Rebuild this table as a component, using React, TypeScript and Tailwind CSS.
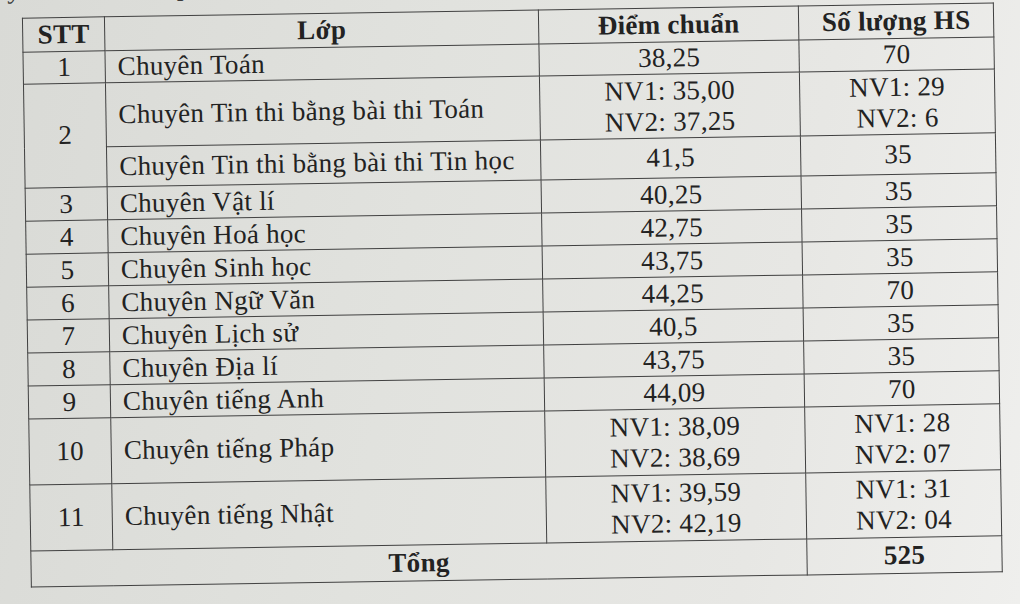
import React from "react";

type Row = {
  stt?: string;
  sttSpan?: number;
  lop: string;
  diem: string[];
  so: string[];
  h: string;
};

const rows: Row[] = [
  { stt: "1", lop: "Chuyên Toán", diem: ["38,25"], so: ["70"], h: "h-[32px]" },
  {
    stt: "2",
    sttSpan: 2,
    lop: "Chuyên Tin thi bằng bài thi Toán",
    diem: ["NV1: 35,00", "NV2: 37,25"],
    so: ["NV1: 29", "NV2: 6"],
    h: "h-[64px]",
  },
  { lop: "Chuyên Tin thi bằng bài thi Tin học", diem: ["41,5"], so: ["35"], h: "h-[40px]" },
  { stt: "3", lop: "Chuyên Vật lí", diem: ["40,25"], so: ["35"], h: "h-[33px]" },
  { stt: "4", lop: "Chuyên Hoá học", diem: ["42,75"], so: ["35"], h: "h-[33px]" },
  { stt: "5", lop: "Chuyên Sinh học", diem: ["43,75"], so: ["35"], h: "h-[33px]" },
  { stt: "6", lop: "Chuyên Ngữ Văn", diem: ["44,25"], so: ["70"], h: "h-[33px]" },
  { stt: "7", lop: "Chuyên Lịch sử", diem: ["40,5"], so: ["35"], h: "h-[33px]" },
  { stt: "8", lop: "Chuyên Địa lí", diem: ["43,75"], so: ["35"], h: "h-[33px]" },
  { stt: "9", lop: "Chuyên tiếng Anh", diem: ["44,09"], so: ["70"], h: "h-[33px]" },
  {
    stt: "10",
    lop: "Chuyên tiếng Pháp",
    diem: ["NV1: 38,09", "NV2: 38,69"],
    so: ["NV1: 28", "NV2: 07"],
    h: "h-[66px]",
  },
  {
    stt: "11",
    lop: "Chuyên tiếng Nhật",
    diem: ["NV1: 39,59", "NV2: 42,19"],
    so: ["NV1: 31", "NV2: 04"],
    h: "h-[66px]",
  },
];

const cell = "border-[1.5px] border-[#404040] p-0 align-middle leading-[31px]";

export default function App() {
  return (
    <div
      className="relative h-[604px] w-[1020px] overflow-hidden bg-[linear-gradient(100deg,#d9dad6_0%,#e1e2de_40%,#e7e7e4_75%,#efefed_100%)] text-[#222222]"
      style={{ fontFamily: '"Liberation Serif", "Times New Roman", serif' }}
    >
      <div className="ml-[26px] mt-[10px] w-[971px] origin-center rotate-[-0.9deg]">
        <div className="-ml-[44px] -mt-[44px] mb-[13px] h-[31px] whitespace-nowrap text-[27px] leading-[31px] tracking-[0.3px] text-[#3a3a3a]">
          Tuyển sinh vào lớp 10 trường
        </div>
        <table className="w-[971px] table-fixed border-collapse text-[27px] tracking-[0.3px]">
          <colgroup>
            <col className="w-[82px]" />
            <col className="w-[434px]" />
            <col className="w-[260px]" />
            <col className="w-[195px]" />
          </colgroup>
          <thead>
            <tr className="h-[34px] font-bold">
              <th className={`${cell} text-center`}>STT</th>
              <th className={`${cell} text-center`}>Lớp</th>
              <th className={`${cell} text-center`}>Điểm chuẩn</th>
              <th className={`${cell} text-center`}>Số lượng HS</th>
            </tr>
          </thead>
          <tbody>
            {rows.map((r, i) => (
              <tr key={i} className={r.h}>
                {r.stt !== undefined && (
                  <td className={`${cell} text-center`} rowSpan={r.sttSpan ?? 1}>
                    {r.stt}
                  </td>
                )}
                <td className={`${cell} pl-[12px] text-left whitespace-nowrap`}>{r.lop}</td>
                <td className={`${cell} text-center`}>
                  {r.diem.map((d, j) => (
                    <div key={j}>{d}</div>
                  ))}
                </td>
                <td className={`${cell} text-center`}>
                  {r.so.map((d, j) => (
                    <div key={j}>{d}</div>
                  ))}
                </td>
              </tr>
            ))}
            <tr className="h-[36px] font-bold">
              <td className={`${cell} text-center`} colSpan={3}>
                Tổng
              </td>
              <td className={`${cell} text-center`}>525</td>
            </tr>
          </tbody>
        </table>
      </div>
    </div>
  );
}
